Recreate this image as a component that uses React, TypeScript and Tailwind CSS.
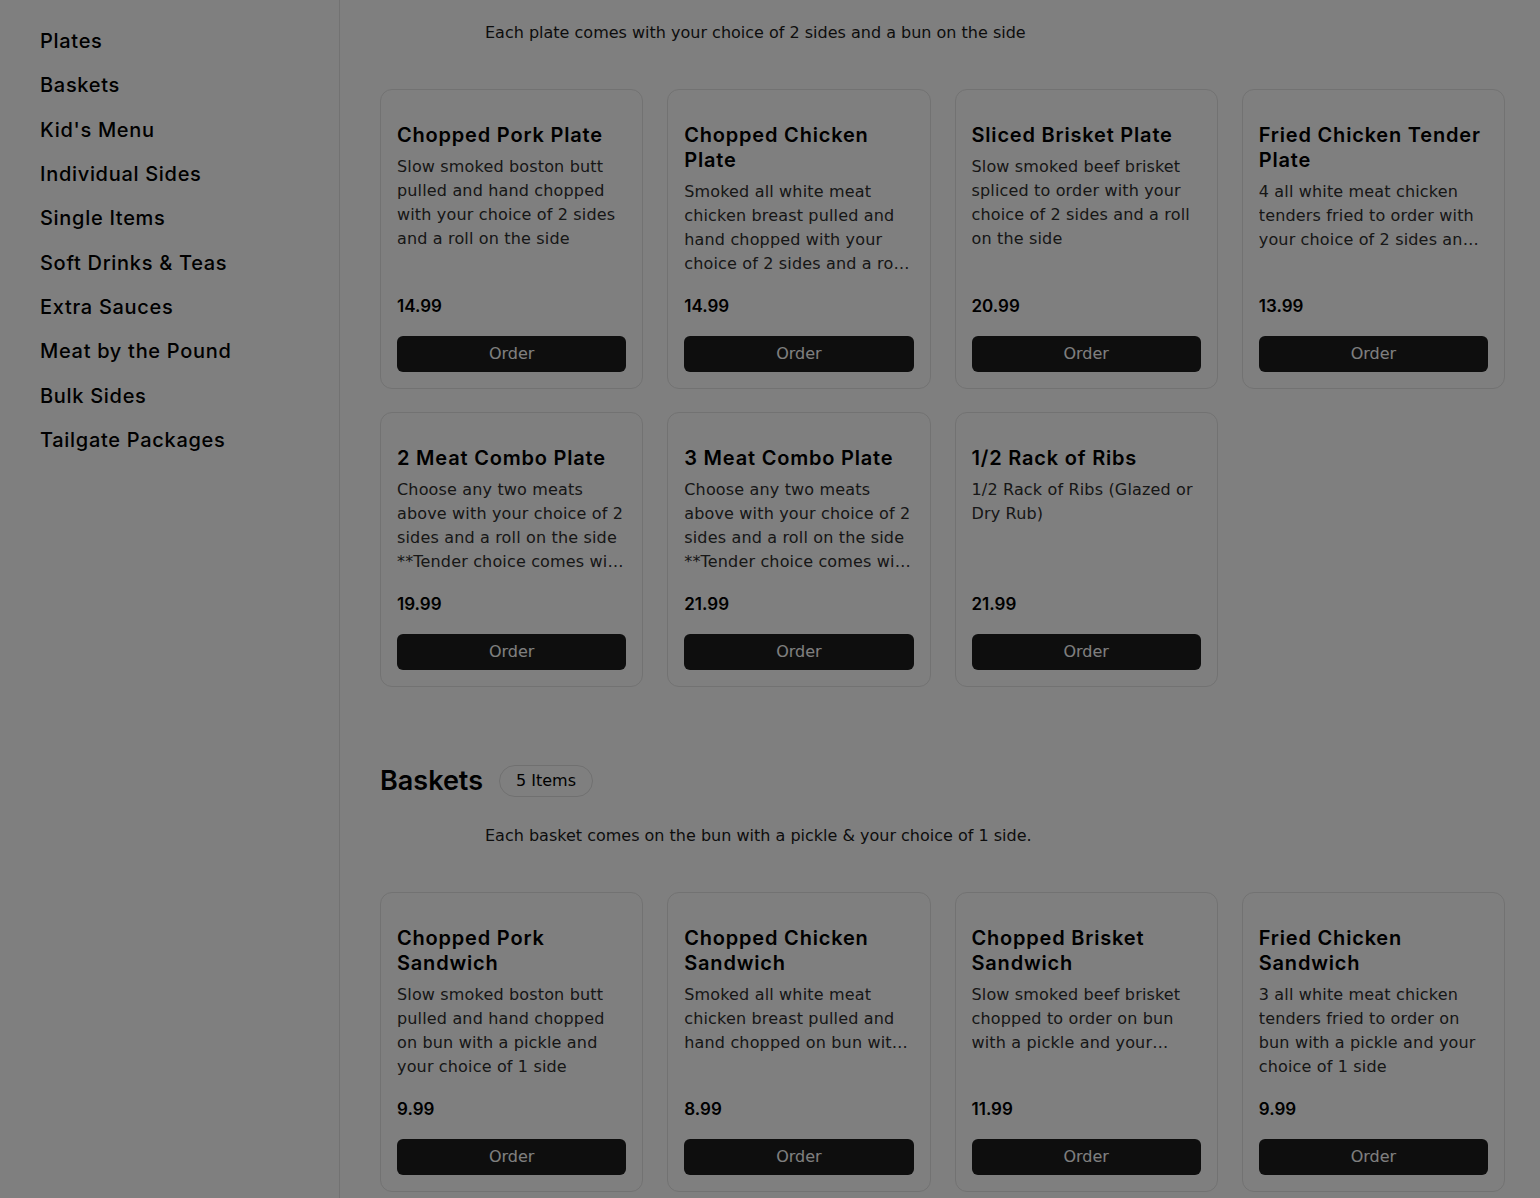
const categories = [
  "Plates",
  "Baskets",
  "Kid's Menu",
  "Individual Sides",
  "Single Items",
  "Soft Drinks & Teas",
  "Extra Sauces",
  "Meat by the Pound",
  "Bulk Sides",
  "Tailgate Packages",
];

type Item = { name: string; desc: string; price: string; clamp: "line-clamp-3" | "line-clamp-4" };

const plates: Item[] = [
  {
    name: "Chopped Pork Plate",
    desc: "Slow smoked boston butt pulled and hand chopped with your choice of 2 sides and a roll on the side",
    price: "14.99",
    clamp: "line-clamp-4",
  },
  {
    name: "Chopped Chicken Plate",
    desc: "Smoked all white meat chicken breast pulled and hand chopped with your choice of 2 sides and a roll on the side",
    price: "14.99",
    clamp: "line-clamp-4",
  },
  {
    name: "Sliced Brisket Plate",
    desc: "Slow smoked beef brisket spliced to order with your choice of 2 sides and a roll on the side",
    price: "20.99",
    clamp: "line-clamp-4",
  },
  {
    name: "Fried Chicken Tender Plate",
    desc: "4 all white meat chicken tenders fried to order with your choice of 2 sides and a roll on the side",
    price: "13.99",
    clamp: "line-clamp-3",
  },
  {
    name: "2 Meat Combo Plate",
    desc: "Choose any two meats above with your choice of 2 sides and a roll on the side **Tender choice comes with 2 tenders",
    price: "19.99",
    clamp: "line-clamp-4",
  },
  {
    name: "3 Meat Combo Plate",
    desc: "Choose any two meats above with your choice of 2 sides and a roll on the side **Tender choice comes with 2 tenders",
    price: "21.99",
    clamp: "line-clamp-4",
  },
  {
    name: "1/2 Rack of Ribs",
    desc: "1/2 Rack of Ribs (Glazed or Dry Rub)",
    price: "21.99",
    clamp: "line-clamp-4",
  },
];

const baskets: Item[] = [
  {
    name: "Chopped Pork Sandwich",
    desc: "Slow smoked boston butt pulled and hand chopped on bun with a pickle and your choice of 1 side",
    price: "9.99",
    clamp: "line-clamp-4",
  },
  {
    name: "Chopped Chicken Sandwich",
    desc: "Smoked all white meat chicken breast pulled and hand chopped on bun with a pickle and your choice of 1 side",
    price: "8.99",
    clamp: "line-clamp-3",
  },
  {
    name: "Chopped Brisket Sandwich",
    desc: "Slow smoked beef brisket chopped to order on bun with a pickle and your choice of 1 side",
    price: "11.99",
    clamp: "line-clamp-3",
  },
  {
    name: "Fried Chicken Sandwich",
    desc: "3 all white meat chicken tenders fried to order on bun with a pickle and your choice of 1 side",
    price: "9.99",
    clamp: "line-clamp-4",
  },
];

function MenuCard({ item }: { item: Item }) {
  return (
    <div className="flex flex-col rounded-xl border border-[#e4e4e4] bg-white px-4 pt-[33px] pb-4">
      <h3 className="font-['Inter',sans-serif] text-[20px] font-semibold leading-[25px] tracking-[0.04em] text-black">
        {item.name}
      </h3>
      <p className={`mt-[7px] text-base leading-6 tracking-[0.01em] text-[#2e2e2e] ${item.clamp}`}>{item.desc}</p>
      <div className="mt-auto pt-4 font-['Inter',sans-serif] text-[17px] font-semibold leading-7 text-black">
        {item.price}
      </div>
      <button className="mt-4 h-9 w-full rounded-md bg-[#1c1c1c] text-base text-white">Order</button>
    </div>
  );
}

export default function App() {
  return (
    <div className="relative flex min-h-screen bg-white font-['DejaVu_Sans',sans-serif] text-black">
      {/* Category sidebar */}
      <aside className="w-[340px] shrink-0 border-r border-[#e4e4e4] pt-[19px] pl-10">
        <nav className="flex flex-col">
          {categories.map((c) => (
            <a
              key={c}
              className="font-['Inter',sans-serif] text-[20px] font-medium leading-[44.33px] tracking-[0.035em] text-black"
            >
              {c}
            </a>
          ))}
        </nav>
      </aside>

      {/* Menu sections */}
      <main className="flex-1 pt-[21px] pl-10 pr-[35px]">
        <section>
          <p className="pl-[105px] text-base leading-6 text-[#1a1a1a]">
            Each plate comes with your choice of 2 sides and a bun on the side
          </p>
          <div className="mt-11 grid grid-cols-4 gap-x-6 gap-y-[23px]">
            {plates.map((p) => (
              <MenuCard key={p.name} item={p} />
            ))}
          </div>
        </section>

        <section className="mt-[76px]">
          <div className="flex items-center gap-4">
            <h2 className="font-['Inter',sans-serif] text-[27px] font-semibold leading-9">Baskets</h2>
            <span className="flex h-8 items-center rounded-full border border-[#e0e0e0] px-4 text-base">
              5 Items
            </span>
          </div>
          <p className="mt-[25px] pl-[105px] text-base leading-6 text-[#1a1a1a]">
            Each basket comes on the bun with a pickle &amp; your choice of 1 side.
          </p>
          <div className="mt-11 grid grid-cols-4 gap-x-6 gap-y-[23px] pb-10">
            {baskets.map((p) => (
              <MenuCard key={p.name} item={p} />
            ))}
          </div>
        </section>
      </main>

      {/* Dimmed overlay */}
      <div className="fixed inset-0 bg-black/50" />
    </div>
  );
}
